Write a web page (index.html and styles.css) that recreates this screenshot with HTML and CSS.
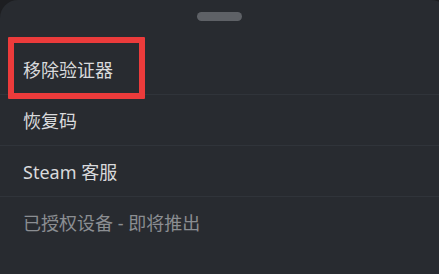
FILE: index.html
```html
<!DOCTYPE html>
<html lang="zh-CN">
<head>
<meta charset="utf-8">
<link rel="stylesheet" href="styles.css">
</head>
<body>
<div class="sheet">
  <div class="handle-area"><div class="handle"></div></div>
  <ul class="menu">
    <li class="item">移除验证器</li>
    <li class="item">恢复码</li>
    <li class="item">Steam 客服</li>
    <li class="item muted">已授权设备 - 即将推出</li>
  </ul>
  <div class="highlight"></div>
</div>
</body>
</html>
```
FILE: styles.css
```css
html, body {
  margin: 0;
  padding: 0;
  background: #1d1e21;
  width: 439px;
  height: 274px;
  overflow: hidden;
}
.sheet {
  position: relative;
  width: 449px;
  height: 274px;
  background: #282b30;
  border-radius: 18px 18px 0 0;
  font-family: "Noto Sans", "Noto Sans CJK SC", sans-serif;
}
.handle-area {
  height: 44px;
  display: flex;
  justify-content: center;
  padding-top: 12px;
  box-sizing: border-box;
  width: 439px;
}
.handle {
  width: 45px;
  height: 9px;
  border-radius: 5px;
  background: #5e6166;
}
.menu {
  list-style: none;
  margin: 0;
  padding: 0;
}
.item {
  height: 50px;
  border-bottom: 1px solid #30343a;
  display: flex;
  align-items: center;
  padding-left: 23px;
  font-size: 18px;
  color: #d9dadc;
}
.item.muted {
  color: #8b8e92;
  border-bottom: none;
}
.highlight {
  position: absolute;
  left: 8px;
  top: 37px;
  width: 137px;
  height: 62px;
  border: 6px solid #ec3b3b;
  box-sizing: border-box;
  border-radius: 1px;
}
```
